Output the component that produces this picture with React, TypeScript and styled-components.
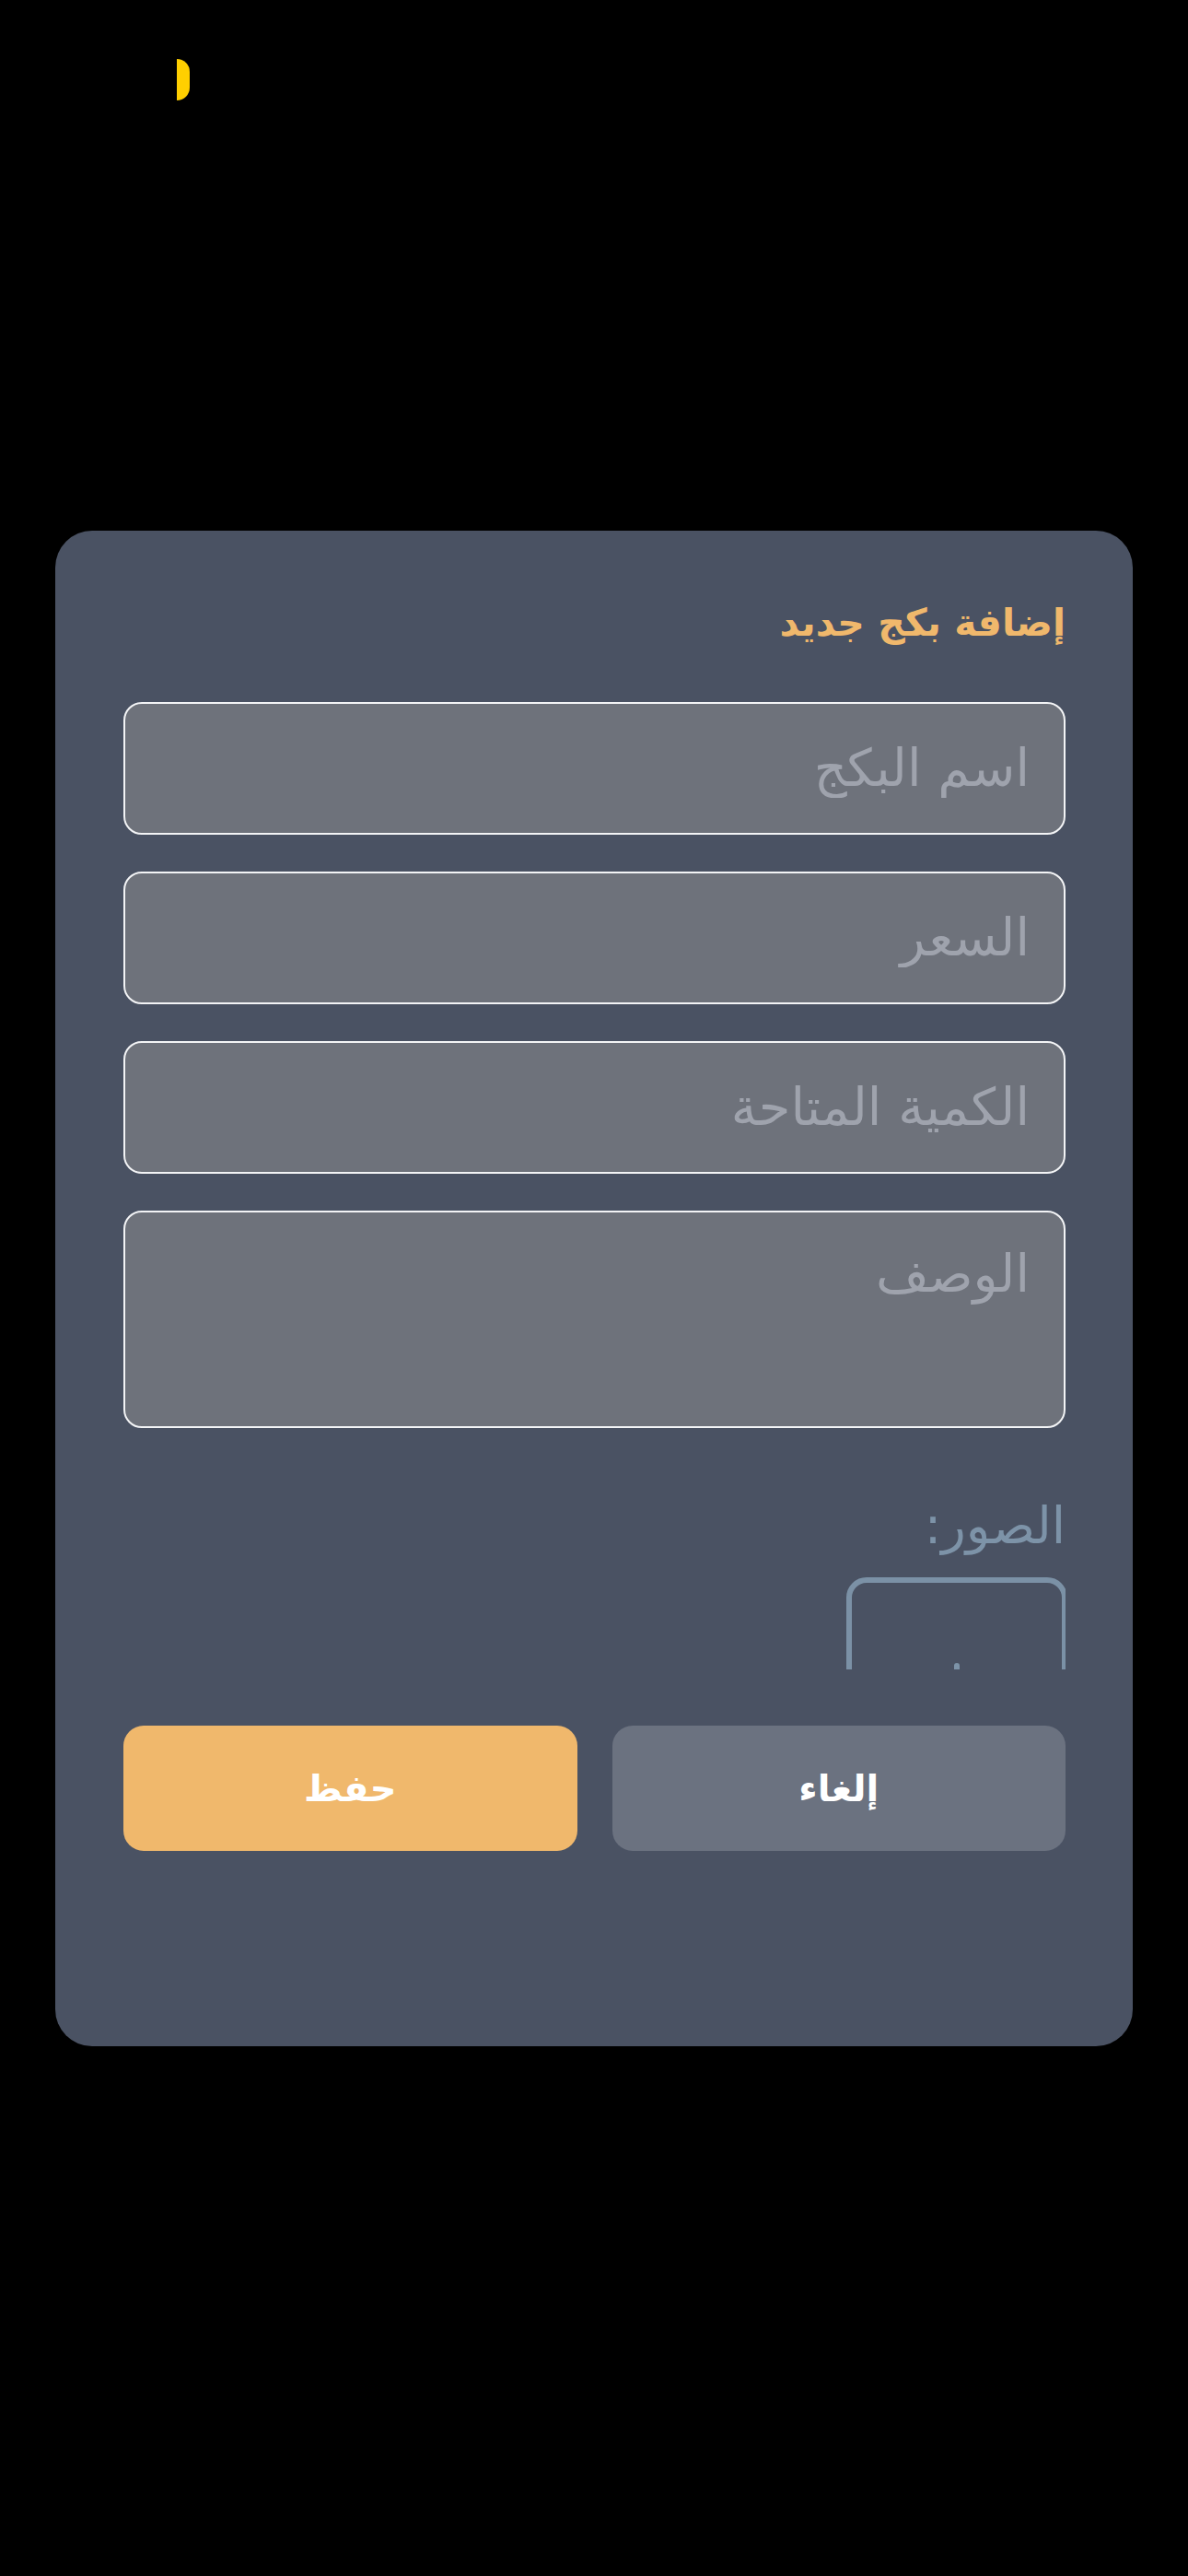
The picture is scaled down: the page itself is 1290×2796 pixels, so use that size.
import styled, { createGlobalStyle } from "styled-components";

const GlobalStyle = createGlobalStyle`
  html, body {
    margin: 0;
    padding: 0;
    background: #000;
  }
  * {
    box-sizing: border-box;
  }
`;

const fields = [
  { name: "name", placeholder: "اسم البكج" },
  { name: "price", placeholder: "السعر" },
  { name: "quantity", placeholder: "الكمية المتاحة" },
];

const App = () => {
  return (
    <>
      <GlobalStyle />
      <Page dir="rtl">
        <StatusDot />
        <Modal>
          <Title>إضافة بكج جديد</Title>
          <Fields>
            {fields.map((f) => (
              <Input key={f.name} name={f.name} placeholder={f.placeholder} />
            ))}
            <TextArea name="description" placeholder="الوصف" />
          </Fields>
          <PhotosLabel>الصور:</PhotosLabel>
          <PhotosStrip>
            <AddPhoto type="button" aria-label="إضافة صورة">
              <svg width="64" height="64" viewBox="0 0 64 64">
                <path
                  d="M32 8v48M8 32h48"
                  stroke="#7d93a8"
                  strokeWidth="6"
                  strokeLinecap="round"
                />
              </svg>
            </AddPhoto>
          </PhotosStrip>
          <Actions>
            <ActionButton $variant="cancel">إلغاء</ActionButton>
            <ActionButton $variant="save">حفظ</ActionButton>
          </Actions>
        </Modal>
      </Page>
    </>
  );
};

const Page = styled.div`
  position: relative;
  min-height: 2796px;
  display: flex;
  align-items: center;
  justify-content: center;
  padding: 0 60px;
  font-family: "DejaVu Sans", "Noto Sans", sans-serif;
`;

const StatusDot = styled.div`
  position: absolute;
  top: 64px;
  left: 192px;
  width: 14px;
  height: 45px;
  background: #ffcf00;
  border-radius: 0 14px 14px 0;
`;

const Modal = styled.div`
  width: 100%;
  background: #4a5263;
  border-radius: 40px;
  padding: 72px 73px 212px 74px;
  display: flex;
  flex-direction: column;
`;

const Title = styled.h2`
  margin: 0 0 58px;
  font-size: 41px;
  line-height: 56px;
  font-weight: 700;
  color: #f0b86c;
`;

const Fields = styled.div`
  display: flex;
  flex-direction: column;
  gap: 40px;
`;

const fieldBase = `
  width: 100%;
  background: #6e727b;
  border: 2px solid #f3f4f6;
  border-radius: 20px;
  padding: 0 37px;
  font-family: "DejaVu Sans", "Noto Sans", sans-serif;
  font-size: 56px;
  color: #fff;
  outline: none;
  &::placeholder {
    color: #9fa3ad;
  }
`;

const Input = styled.input`
  ${fieldBase}
  height: 144px;
`;

const TextArea = styled.textarea`
  ${fieldBase}
  height: 236px;
  padding-top: 31px;
  resize: none;
  line-height: 1.3;
`;

const PhotosLabel = styled.div`
  margin-top: 68px;
  font-size: 55px;
  line-height: 76px;
  color: #7d93a8;
`;

const PhotosStrip = styled.div`
  margin-top: 18px;
  height: 100px;
  overflow: hidden;
  display: flex;
  gap: 24px;
`;

const AddPhoto = styled.button`
  flex: 0 0 240px;
  height: 240px;
  margin-right: -2px;
  background: transparent;
  border: 6px solid #7b91a6;
  border-radius: 22px;
  display: flex;
  align-items: center;
  justify-content: center;
  padding: 0;
`;

const Actions = styled.div`
  margin-top: 61px;
  display: grid;
  grid-template-columns: 1fr 1fr;
  gap: 38px;
`;

const ActionButton = styled.button<{ $variant: "save" | "cancel" }>`
  height: 136px;
  border: none;
  border-radius: 22px;
  background: ${(p) => (p.$variant === "save" ? "#f0b86c" : "#6b7280")};
  color: #fff;
  font-family: "DejaVu Sans", "Noto Sans", sans-serif;
  font-size: 40px;
  font-weight: 700;
`;

export default App;
